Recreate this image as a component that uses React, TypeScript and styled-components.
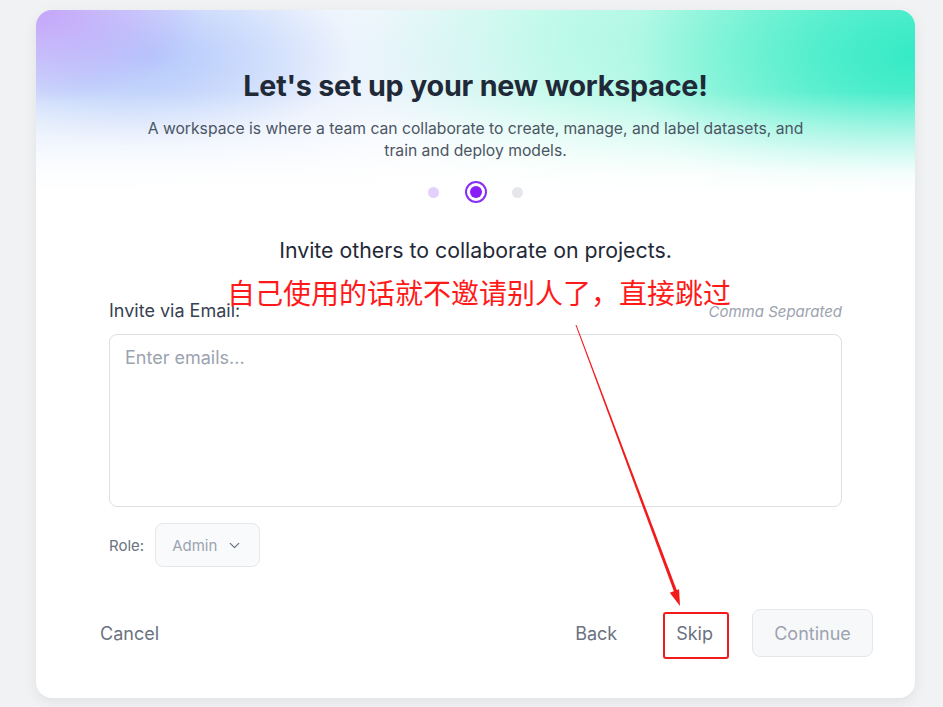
import React from "react";
import styled, { createGlobalStyle } from "styled-components";
import { ChevronDown } from "lucide-react";

const Global = createGlobalStyle`
  html, body { margin: 0; padding: 0; background: #f1f2f4; }
  body { font-family: Inter, "Noto Sans", sans-serif; overflow: hidden; }
  * { box-sizing: border-box; }
`;

const Page = styled.div`
  width: 943px;
  height: 707px;
  padding: 10px 28px 0 36px;
`;

const Card = styled.div`
  position: relative;
  width: 879px;
  height: 688px;
  background: #fff;
  border-radius: 16px;
  overflow: hidden;
  box-shadow: 0 4px 14px rgba(0, 0, 0, 0.07);
  display: flex;
  flex-direction: column;
`;

const Header = styled.div`
  display: flex;
  flex-direction: column;
  align-items: center;
  padding: 58px 0 0;
  height: 205px;
  background:
    linear-gradient(to bottom, rgba(255,255,255,0) 40%, rgba(255,255,255,0.55) 65%, rgba(255,255,255,0.9) 80%, #fff 90%),
    radial-gradient(ellipse 170px 95px at 0% 0%, rgba(196,160,250,0.95) 0%, rgba(196,160,250,0) 100%),
    radial-gradient(ellipse 200px 95px at 13% 22%, rgba(176,198,252,0.9) 0%, rgba(176,198,252,0) 100%),
    radial-gradient(ellipse 480px 210px at 5% 35%, rgba(210,225,250,0.95) 0%, rgba(210,225,250,0) 100%),
    radial-gradient(ellipse 280px 190px at 100% 22%, rgba(52,234,198,1) 0%, rgba(52,234,198,0) 100%),
    radial-gradient(ellipse 480px 240px at 92% 22%, rgba(120,245,210,0.9) 0%, rgba(150,245,220,0.5) 55%, rgba(200,250,235,0) 100%),
    radial-gradient(ellipse 260px 170px at 62% 10%, rgba(210,252,238,0.8) 0%, rgba(255,255,255,0) 100%),
    #fff;
`;

const Title = styled.h1`
  margin: 0;
  font-size: 28.7px;
  line-height: 36px;
  font-weight: 700;
  color: #1f2937;
  letter-spacing: -0.2px;
`;

const Subtitle = styled.p`
  margin: 14px 0 0;
  width: 680px;
  text-align: center;
  font-size: 15.7px;
  line-height: 22px;
  color: #4b5563;
`;

const Steps = styled.div`
  margin-top: 19px;
  display: flex;
  align-items: center;
`;

const Dot = styled.span<{ $tone: "done" | "todo" }>`
  width: 11px;
  height: 11px;
  border-radius: 50%;
  background: ${(p) => (p.$tone === "done" ? "#e4d0fc" : "#e5e7eb")};
`;

const ActiveDot = styled.span`
  margin: 0 25px 0 26px;
  width: 22px;
  height: 22px;
  border-radius: 50%;
  border: 2px solid #8a2ef2;
  display: flex;
  align-items: center;
  justify-content: center;
  &::after {
    content: "";
    width: 12px;
    height: 12px;
    border-radius: 50%;
    background: #8a1ff5;
  }
`;

const Body = styled.div`
  padding: 21px 73px 0;
  display: flex;
  flex-direction: column;
`;

const Heading = styled.h2`
  margin: 0;
  text-align: center;
  font-size: 21.3px;
  line-height: 28px;
  font-weight: 400;
  color: #1f2937;
`;

const LabelRow = styled.div`
  margin-top: 35px;
  display: flex;
  justify-content: space-between;
  align-items: baseline;
`;

const Label = styled.label`
  font-size: 18px;
  line-height: 24px;
  color: #374151;
`;

const Hint = styled.span`
  font-size: 15px;
  font-style: italic;
  color: #9ca3af;
`;

const EmailBox = styled.textarea`
  margin-top: 11px;
  height: 173px;
  width: 100%;
  resize: none;
  border: 1px solid #dcdfe4;
  border-radius: 8px;
  padding: 12px 15px;
  font-family: Inter, sans-serif;
  font-size: 18px;
  color: #374151;
  outline: none;
  &::placeholder { color: #9ca3af; }
`;

const RoleRow = styled.div`
  margin-top: 16px;
  display: flex;
  align-items: center;
  gap: 11px;
`;

const RoleLabel = styled.span`
  font-size: 15px;
  color: #6b7280;
`;

const Select = styled.div`
  height: 44px;
  width: 105px;
  padding: 0 16px;
  display: flex;
  align-items: center;
  justify-content: space-between;
  background: #f9fafb;
  border: 1px solid #e5e7eb;
  border-radius: 8px;
  font-size: 15px;
  color: #9ca3af;
`;

const Footer = styled.div`
  margin-top: 42px;
  padding: 0 42px 0 44px;
  display: flex;
  align-items: center;
`;

const Spacer = styled.div`
  flex: 1;
`;

const TextButton = styled.button`
  height: 48px;
  padding: 0 20px;
  border: none;
  background: transparent;
  font-family: Inter, sans-serif;
  font-size: 18px;
  color: #6b7280;
  cursor: pointer;
`;

const Actions = styled.div`
  display: flex;
  align-items: center;
  gap: 19px;
`;

const PrimaryButton = styled.button`
  height: 48px;
  width: 121px;
  border: 1px solid #e5e7eb;
  border-radius: 8px;
  background: #f7f8fa;
  font-family: Inter, sans-serif;
  font-size: 18px;
  color: #9ca3af;
`;

const Note = styled.div`
  position: absolute;
  left: 191px;
  top: 263px;
  font-family: "Noto Sans CJK SC", sans-serif;
  font-size: 28px;
  line-height: 38px;
  color: #ff1a1a;
  white-space: nowrap;
`;

const Mark = styled.div`
  position: absolute;
  left: 627px;
  top: 602px;
  width: 66px;
  height: 47px;
  border: 2px solid #f21b1b;
  border-radius: 3px;
`;

const Arrow = styled.svg`
  position: absolute;
  left: 0;
  top: 0;
  pointer-events: none;
`;

export default function App() {
  return (
    <>
      <Global />
      <Page>
        <Card>
          <Header>
            <Title>Let's set up your new workspace!</Title>
            <Subtitle>
              A workspace is where a team can collaborate to create, manage, and label datasets, and train
              and deploy models.
            </Subtitle>
            <Steps>
              <Dot $tone="done" />
              <ActiveDot />
              <Dot $tone="todo" />
            </Steps>
          </Header>
          <Body>
            <Heading>Invite others to collaborate on projects.</Heading>
            <LabelRow>
              <Label>Invite via Email:</Label>
              <Hint>Comma Separated</Hint>
            </LabelRow>
            <EmailBox placeholder="Enter emails..." />
            <RoleRow>
              <RoleLabel>Role:</RoleLabel>
              <Select>
                Admin
                <ChevronDown size={17} color="#6b7280" strokeWidth={1.8} />
              </Select>
            </RoleRow>
          </Body>
          <Footer>
            <TextButton>Cancel</TextButton>
            <Spacer />
            <Actions>
              <TextButton>Back</TextButton>
              <TextButton>Skip</TextButton>
              <PrimaryButton>Continue</PrimaryButton>
            </Actions>
          </Footer>
          <Note>自己使用的话就不邀请别人了，直接跳过</Note>
          <Arrow width="879" height="688" viewBox="0 0 879 688">
            <polygon points="539.5,315 540.5,315 641.5,582 638.5,583" fill="#f21b1b" />
            <polygon points="644,596 643.1,579.3 633.8,582.7" fill="#f21b1b" />
          </Arrow>
          <Mark />
        </Card>
      </Page>
    </>
  );
}
